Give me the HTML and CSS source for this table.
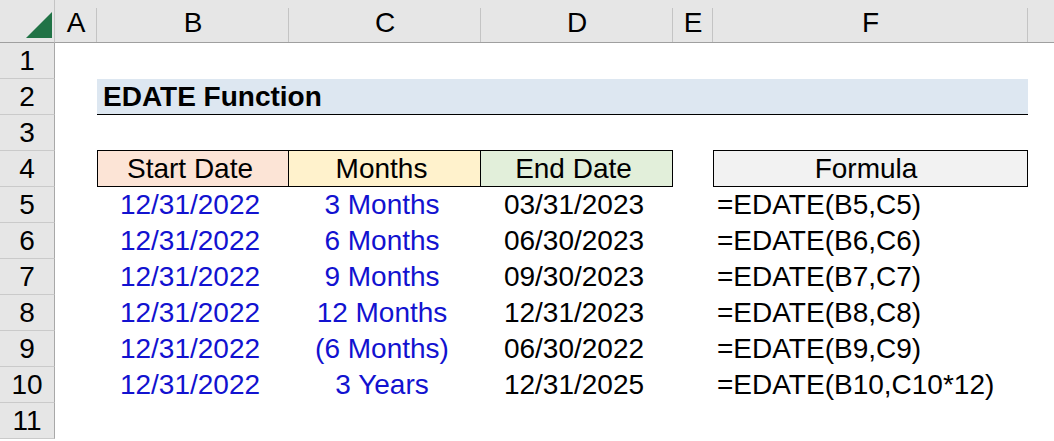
FILE: index.html
```html
<!DOCTYPE html>
<html>
<head>
<meta charset="utf-8">
<link rel="stylesheet" href="styles.css">
</head>
<body>
<div class="sheet">
  <div class="corner"><svg class="tri" width="55" height="43" viewBox="0 0 55 43"><polygon points="52,12 52,38 26,38" fill="#217346"/></svg></div>
  <div class="ch">A</div>
  <div class="ch">B</div>
  <div class="ch">C</div>
  <div class="ch">D</div>
  <div class="ch">E</div>
  <div class="ch">F</div>
  <div class="ch last"></div>

  <div class="rh">1</div><div class="row-fill"></div>

  <div class="rh">2</div><div class="cell a"></div><div class="title">EDATE Function</div><div class="cell g"></div>

  <div class="rh">3</div><div class="row-fill"></div>

  <div class="rh">4</div><div class="cell a"></div>
  <div class="hd start">Start Date</div>
  <div class="hd months">Months</div>
  <div class="hd end">End Date</div>
  <div class="cell e"></div>
  <div class="hd formula">Formula</div>
  <div class="cell g"></div>

  <div class="rh">5</div><div class="cell a"></div>
  <div class="cell c blue">12/31/2022</div><div class="cell c blue">3 Months</div><div class="cell c">03/31/2023</div><div class="cell e"></div><div class="cell f">=EDATE(B5,C5)</div><div class="cell g"></div>

  <div class="rh">6</div><div class="cell a"></div>
  <div class="cell c blue">12/31/2022</div><div class="cell c blue">6 Months</div><div class="cell c">06/30/2023</div><div class="cell e"></div><div class="cell f">=EDATE(B6,C6)</div><div class="cell g"></div>

  <div class="rh">7</div><div class="cell a"></div>
  <div class="cell c blue">12/31/2022</div><div class="cell c blue">9 Months</div><div class="cell c">09/30/2023</div><div class="cell e"></div><div class="cell f">=EDATE(B7,C7)</div><div class="cell g"></div>

  <div class="rh">8</div><div class="cell a"></div>
  <div class="cell c blue">12/31/2022</div><div class="cell c blue">12 Months</div><div class="cell c">12/31/2023</div><div class="cell e"></div><div class="cell f">=EDATE(B8,C8)</div><div class="cell g"></div>

  <div class="rh">9</div><div class="cell a"></div>
  <div class="cell c blue">12/31/2022</div><div class="cell c blue">(6 Months)</div><div class="cell c">06/30/2022</div><div class="cell e"></div><div class="cell f">=EDATE(B9,C9)</div><div class="cell g"></div>

  <div class="rh">10</div><div class="cell a"></div>
  <div class="cell c blue">12/31/2022</div><div class="cell c blue">3 Years</div><div class="cell c">12/31/2025</div><div class="cell e"></div><div class="cell f">=EDATE(B10,C10*12)</div><div class="cell g"></div>

  <div class="rh">11</div><div class="row-fill"></div>
</div>
</body>
</html>
```

FILE: styles.css
```css
html, body {
  margin: 0;
  padding: 0;
  background: #ffffff;
}
body {
  font-family: "Liberation Sans", Arial, sans-serif;
  font-size: 28px;
  color: #000;
  width: 1054px;
  height: 441px;
  overflow: hidden;
}
.sheet {
  display: grid;
  grid-template-columns: 55px 42px 192px 192px 192px 40px 315px 26px;
  grid-template-rows: 43px repeat(11, 36px);
  width: 1054px;
}
.corner {
  background: #e6e6e6;
  border-bottom: 1px solid #9f9f9f;
  border-right: 1px solid #c4c4c4;
  box-sizing: border-box;
  position: relative;
}
.tri {
  display: block;
}
.ch {
  background: #e6e6e6;
  border-bottom: 1px solid #9f9f9f;
  box-sizing: border-box;
  display: flex;
  align-items: flex-end;
  justify-content: center;
  position: relative;
  padding-bottom: 4px;
  line-height: 30px;
}
.ch::after {
  content: "";
  position: absolute;
  right: 0;
  top: 8px;
  bottom: 0;
  width: 1px;
  background: #c4c4c4;
}
.ch.last::after {
  display: none;
}
.rh {
  background: #e6e6e6;
  border-right: 1px solid #a8a8a8;
  border-bottom: 1px solid #cacaca;
  box-sizing: border-box;
  display: flex;
  align-items: center;
  justify-content: center;
}
.row-fill {
  grid-column: 2 / 9;
}
.cell {
  display: flex;
  align-items: center;
  white-space: nowrap;
}
.cell.c {
  justify-content: center;
  padding-right: 6px;
}
.cell.f {
  padding-left: 4px;
}
.blue {
  color: #1212d0;
}
.title {
  grid-column: 3 / 8;
  background: #dde7f1;
  border-bottom: 1px solid #000;
  box-sizing: border-box;
  font-weight: bold;
  display: flex;
  align-items: center;
  padding-left: 6px;
  height: 36px;
}
.hd {
  margin-top: -1px;
  border: 1px solid #000;
  display: flex;
  align-items: center;
  justify-content: center;
  box-sizing: border-box;
  padding-right: 6px;
}
.hd.months, .hd.end {
  border-left: none;
}
.start { background: #fce4d6; }
.months { background: #fff2cc; }
.end { background: #e2efda; }
.formula { background: #f2f2f2; padding-right: 9px; }
```
